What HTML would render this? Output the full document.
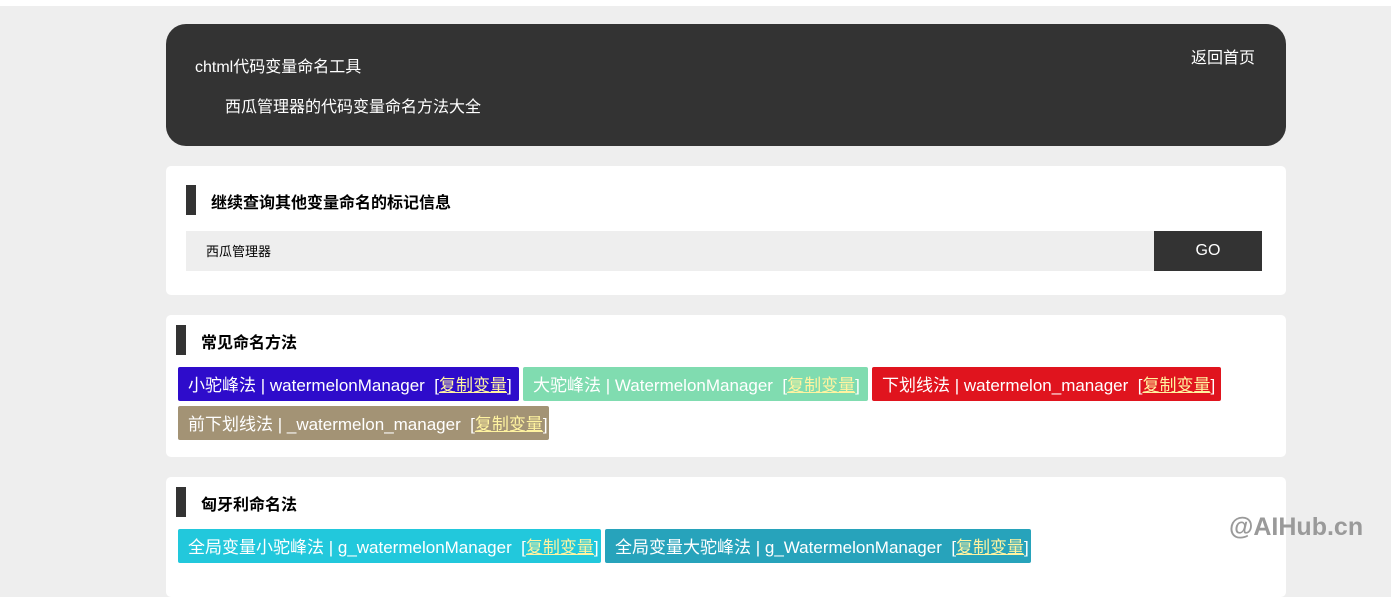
<!DOCTYPE html>
<html><head><meta charset="utf-8"><style>
body{margin:0;background:#eee;font-family:"Liberation Sans","Noto Sans CJK SC",sans-serif;width:1391px;height:568px;overflow:hidden;position:relative}
.top{position:absolute;left:0;top:0;width:1391px;height:6px;background:#fff}
.hd{position:absolute;left:166px;top:24px;width:1120px;height:122px;background:#333;border-radius:20px;color:#fff}
.card{position:absolute;left:166px;width:1120px;background:#fff;border-radius:5px}
.bar{position:absolute;width:10px;height:30px;background:#333}
.ttl{position:absolute;font-size:16px;font-weight:bold;color:#000}
.tag{position:absolute;height:34px;line-height:37px;color:#fff;font-size:17px;padding:0 10px;border-radius:2px;white-space:nowrap;box-sizing:border-box;overflow:hidden}
.tag u{color:#fff3a0}
</style></head><body>
<div class="top"></div>
<div class="hd">
<div style="position:absolute;left:29px;top:29px;font-size:16px">chtml代码变量命名工具</div>
<div style="position:absolute;left:59px;top:69px;font-size:16px">西瓜管理器的代码变量命名方法大全</div>
<div style="position:absolute;left:1025px;top:20px;font-size:16px">返回首页</div>
</div>
<div class="card" style="top:166px;height:129px">
<div class="bar" style="left:20px;top:19px"></div>
<div class="ttl" style="left:45px;top:23px">继续查询其他变量命名的标记信息</div>
<div style="position:absolute;left:20px;top:65px;width:968px;height:40px;background:#eee;font-size:13px;line-height:42px;padding-left:20px;box-sizing:border-box">西瓜管理器</div>
<div style="position:absolute;left:988px;top:65px;width:108px;height:40px;background:#333;color:#fff;font-size:16px;line-height:40px;text-align:center">GO</div>
</div>
<div class="card" style="top:315px;height:142px">
<div class="bar" style="left:10px;top:10px"></div>
<div class="ttl" style="left:35px;top:14px">常见命名方法</div>
</div>
<div class="tag" style="left:178px;top:367px;width:341px;background:#2e0ccb">小驼峰法 | watermelonManager &nbsp;[<u>复制变量</u>]</div>
<div class="tag" style="left:523px;top:367px;width:345px;background:#80dcb0">大驼峰法 | WatermelonManager &nbsp;[<u>复制变量</u>]</div>
<div class="tag" style="left:872px;top:367px;width:349px;background:#e0141e">下划线法 | watermelon_manager &nbsp;[<u>复制变量</u>]</div>
<div class="tag" style="left:178px;top:406px;width:371px;background:#a39375">前下划线法 | _watermelon_manager &nbsp;[<u>复制变量</u>]</div>
<div class="card" style="top:477px;height:120px">
<div class="bar" style="left:10px;top:10px"></div>
<div class="ttl" style="left:35px;top:14px">匈牙利命名法</div>
</div>
<div class="tag" style="left:178px;top:529px;width:423px;background:#22c8dc">全局变量小驼峰法 | g_watermelonManager &nbsp;[<u>复制变量</u>]</div>
<div class="tag" style="left:605px;top:529px;width:426px;background:#27a3bb">全局变量大驼峰法 | g_WatermelonManager &nbsp;[<u>复制变量</u>]</div>
<div style="position:absolute;left:1229px;top:513px;font-size:25px;font-weight:bold;color:#9a9a9a">@AIHub.cn</div>
</body></html>
